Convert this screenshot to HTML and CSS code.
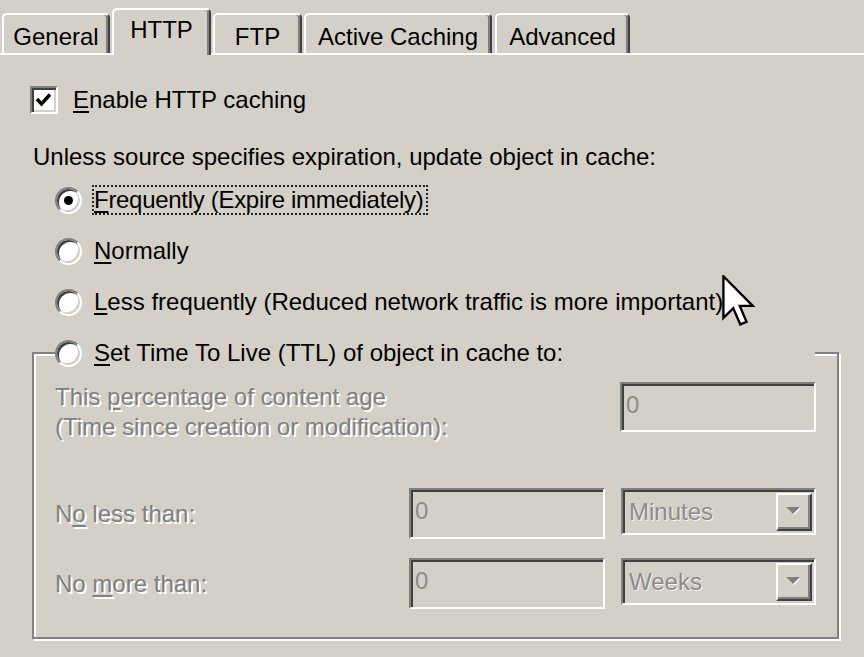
FILE: index.html
```html
<!DOCTYPE html>
<html>
<head>
<meta charset="utf-8">
<title>HTTP caching</title>
<link rel="stylesheet" href="styles.css">
</head>
<body>
<div class="dialog">
  <div class="tabstrip">
    <div class="tab tab-general">General</div>
    <div class="tab tab-http active">HTTP</div>
    <div class="tab tab-ftp">FTP</div>
    <div class="tab tab-active">Active Caching</div>
    <div class="tab tab-advanced">Advanced</div>
  </div>

  <div class="panel">
    <div class="check-row">
      <span class="checkbox">
        <svg width="24" height="24" viewBox="0 0 24 24"><polyline points="5,11 9.5,16 18,6.5" fill="none" stroke="#000" stroke-width="3.4"/></svg>
      </span>
      <span class="check-label"><u>E</u>nable HTTP caching</span>
    </div>

    <div class="para">Unless source specifies expiration, update object in cache:</div>

    <div class="radio-list">
      <div class="radio-row">
        <span class="radio checked"></span>
        <span class="radio-label focus"><u>F</u>requently (Expire immediately)</span>
      </div>
      <div class="radio-row">
        <span class="radio"></span>
        <span class="radio-label"><u>N</u>ormally</span>
      </div>
      <div class="radio-row">
        <span class="radio"></span>
        <span class="radio-label"><u>L</u>ess frequently (Reduced network traffic is more important)</span>
      </div>
    </div>

    <div class="group">
      <div class="legend">
        <span class="radio"></span>
        <span class="radio-label"><u>S</u>et Time To Live (TTL) of object in cache to:</span>
      </div>

      <div class="pct-row">
        <div class="dim-label">This <u>p</u>ercentage of content age<br>(Time since creation or modification):</div>
        <div class="textbox">0</div>
      </div>

      <div class="field-row first">
        <div class="dim-label row-label">N<u>o</u> less than:</div>
        <div class="textbox">0</div>
        <div class="combo">
          <span class="combo-text">Minutes</span>
          <span class="combo-btn"><span class="arrow"></span></span>
        </div>
      </div>

      <div class="field-row second">
        <div class="dim-label row-label">No <u>m</u>ore than:</div>
        <div class="textbox">0</div>
        <div class="combo">
          <span class="combo-text">Weeks</span>
          <span class="combo-btn"><span class="arrow"></span></span>
        </div>
      </div>
    </div>
  </div>

  <svg class="cursor" width="34" height="52" viewBox="0 0 13 20">
    <path d="M0.5 0.5 L0.5 16.5 L4.3 12.8 L7 19 L9.4 18 L6.8 11.9 L11.8 11.9 Z" fill="#fff" stroke="#000" stroke-width="0.9" stroke-linejoin="miter"/>
  </svg>
</div>
</body>
</html>
```

FILE: styles.css
```css
* { box-sizing: border-box; }

html, body {
  margin: 0;
  padding: 0;
}

body {
  background: #d4d0c8;
  font-family: "Liberation Sans", Arial, sans-serif;
  font-size: 24px;
  color: #000;
  width: 864px;
  height: 657px;
  overflow: hidden;
}

u {
  text-decoration-thickness: 2px;
  text-underline-offset: 3px;
}

.dialog {
  position: relative;
  height: 657px;
}

/* ---------- tabs ---------- */
.tabstrip {
  display: flex;
  align-items: flex-end;
  height: 55px;
  padding-left: 2px;
  border-bottom: 2px solid #fff;
}

.tab {
  height: 40px;
  padding-top: 7px;
  line-height: 30px;
  text-align: center;
  white-space: nowrap;
  border-top: 2px solid #fff;
  border-left: 2px solid #fff;
  border-right: 2px solid #404040;
  border-radius: 5px 5px 0 0;
  box-shadow: inset -2px 0 0 #808080;
  margin-right: 2px;
}

.tab.active {
  position: relative;
  z-index: 1;
  height: 47px;
  padding-top: 5px;
  margin-bottom: -2px;
  background: #d4d0c8;
}

.tab-general { width: 108px; }
.tab-http { width: 99px; }
.tab-ftp { width: 89px; }
.tab-active { width: 188px; margin-right: 3px; }
.tab-advanced { width: 135px; }

/* ---------- panel ---------- */
.panel {
  display: flex;
  flex-direction: column;
}

.check-row {
  display: flex;
  align-items: center;
  height: 30px;
  margin: 30px 0 0 30px;
}

.checkbox {
  width: 28px;
  height: 28px;
  flex: none;
  background: #fff;
  border: 2px solid;
  border-color: #808080 #fff #fff #808080;
  box-shadow: inset 2px 2px 0 #404040, inset -2px -2px 0 #d4d0c8;
  display: flex;
  align-items: center;
  justify-content: center;
}

.checkbox svg { display: block; }

.check-label {
  margin-left: 15px;
  line-height: 30px;
}

.para {
  margin: 27px 0 0 33px;
  line-height: 30px;
}

.radio-list {
  display: flex;
  flex-direction: column;
  gap: 21px;
  margin-top: 13px;
  padding-left: 55px;
}

.radio-row {
  display: flex;
  align-items: center;
  height: 30px;
}

.radio {
  width: 27px;
  height: 27px;
  flex: none;
  border-radius: 50%;
  background: #fff;
  border: 2px solid;
  border-color: #808080 #fff #fff #808080;
  box-shadow: inset 2px 2px 0 #404040, inset -2px -2px 0 #d4d0c8;
  display: flex;
  align-items: center;
  justify-content: center;
}

.radio.checked::after {
  content: "";
  width: 9px;
  height: 9px;
  border-radius: 50%;
  background: #000;
}

.radio-label {
  margin-left: 10px;
  border: 2px solid transparent;
  padding-right: 2px;
  line-height: 26px;
  white-space: nowrap;
}

.radio-label.focus {
  border: 2px dotted #222;
  letter-spacing: -0.3px;
}

/* ---------- group box ---------- */
.group {
  margin: 35px 25px 0 32px;
  border: 2px solid #808080;
  box-shadow: inset 2px 2px 0 #fff, 2px 2px 0 #fff;
  padding: 0 21px 28px 21px;
  display: flex;
  flex-direction: column;
}

.legend {
  display: flex;
  align-items: center;
  width: 760px;
  height: 30px;
  margin-top: -16px;
  background: #d4d0c8;
}

.dim-label {
  color: #808080;
  text-shadow: 2px 2px 0 #fff;
  line-height: 30px;
  white-space: nowrap;
}

.pct-row {
  display: flex;
  justify-content: space-between;
  align-items: flex-start;
  margin-top: 14px;
}

.field-row {
  display: flex;
  align-items: flex-start;
  gap: 16px;
}

.field-row.first { margin-top: 46px; }
.field-row.second { margin-top: 19px; }

.row-label {
  flex: 1;
  line-height: 51px;
}

.textbox {
  width: 196px;
  height: 51px;
  border: 2px solid;
  border-color: #808080 #fff #fff #808080;
  box-shadow: inset 2px 2px 0 #404040, inset -2px -2px 0 #d4d0c8;
  color: #8c8c8c;
  padding: 6px 0 0 4px;
  line-height: 30px;
}

.pct-row .textbox { height: 50px; }

.combo {
  width: 195px;
  height: 47px;
  border: 2px solid;
  border-color: #808080 #fff #fff #808080;
  box-shadow: inset 2px 2px 0 #404040, inset -2px -2px 0 #d4d0c8;
  display: flex;
  align-items: center;
  justify-content: space-between;
  padding: 3px 2px 3px 6px;
}

.combo-text {
  color: #8c8c8c;
  text-shadow: 1px 1px 0 #f4f4f4;
  line-height: 30px;
}

.combo-btn {
  width: 36px;
  height: 38px;
  border: 2px solid;
  border-color: #fff #404040 #404040 #fff;
  box-shadow: inset -2px -2px 0 #808080;
  background: #d4d0c8;
  display: flex;
  align-items: center;
  justify-content: center;
}

.arrow {
  width: 0;
  height: 0;
  border-left: 7px solid transparent;
  border-right: 7px solid transparent;
  border-top: 7px solid #808080;
  filter: drop-shadow(1px 1px 0 #fff);
  margin: 0 2px 2px 0;
}

/* ---------- mouse pointer over content ---------- */
.cursor {
  position: absolute;
  left: 722px;
  top: 275px;
  z-index: 5;
}
```
